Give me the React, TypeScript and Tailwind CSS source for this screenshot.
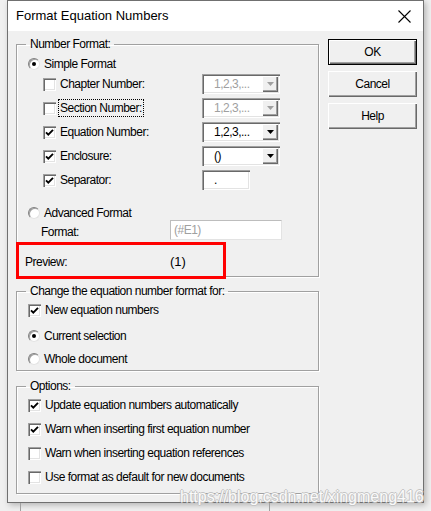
import React from "react";

const sunken =
  "shadow-[inset_1px_1px_0_#a0a0a0,inset_2px_2px_0_#696969,inset_-1px_-1px_0_#ffffff,inset_-2px_-2px_0_#e3e3e3]";
const raised =
  "shadow-[inset_1px_1px_0_#ffffff,inset_-1px_-1px_0_#696969,inset_-2px_-2px_0_#a0a0a0]";
const groupBox =
  "border border-[#a0a0a0] shadow-[inset_1px_1px_0_#ffffff,1px_1px_0_#ffffff]";

function Check({ on }: { on?: boolean }) {
  return (
    <span className={`flex h-[13px] w-[13px] shrink-0 items-center justify-center bg-white ${sunken}`}>
      {on && (
        <svg width="13" height="13" viewBox="0 0 13 13">
          <path d="M3 6.3l2.3 2.3L10 3.8" fill="none" stroke="#000" strokeWidth="1.9" />
        </svg>
      )}
    </span>
  );
}

function Radio({ on }: { on?: boolean }) {
  return (
    <span className="flex h-[12px] w-[12px] shrink-0 items-center justify-center rounded-full border border-t-[#808080] border-l-[#808080] border-r-[#e3e3e3] border-b-[#e3e3e3] bg-white shadow-[inset_1px_1px_0_#a0a0a0]">
      {on && <span className="h-[4px] w-[4px] rounded-full bg-black" />}
    </span>
  );
}

function Arrow({ disabled }: { disabled?: boolean }) {
  return (
    <span className={`flex h-[16px] w-[16px] items-center justify-center bg-[#f0f0f0] ${raised}`}>
      <svg width="7" height="4" viewBox="0 0 7 4">
        <path d="M0 0h7L3.5 4z" fill={disabled ? "#a0a0a0" : "#000"} />
      </svg>
    </span>
  );
}

function Combo({ value, disabled }: { value: string; disabled?: boolean }) {
  return (
    <div className={`flex h-[20px] w-[78px] items-center justify-between bg-white pl-[12px] pr-[2px] ${sunken}`}>
      <span className={disabled ? "text-[#a0a0a0]" : "text-black"}>{value}</span>
      <Arrow disabled={disabled} />
    </div>
  );
}

function CheckRow({
  label,
  on,
  focus,
  children,
}: {
  label: string;
  on?: boolean;
  focus?: boolean;
  children: React.ReactNode;
}) {
  return (
    <div className="mt-[4px] flex h-[20px] items-center">
      <div className="ml-[18px] flex w-[159px] items-center gap-[4px]">
        <Check on={on} />
        <span className={focus ? "outline outline-1 outline-dotted outline-black outline-offset-[1px]" : ""}>
          {label}
        </span>
      </div>
      {children}
    </div>
  );
}

function Option({ label, on, radio, className }: { label: string; on?: boolean; radio?: boolean; className: string }) {
  return (
    <div className={`ml-[3px] flex h-[16px] items-center gap-[4px] ${className}`}>
      {radio ? <Radio on={on} /> : <Check on={on} />}
      <span>{label}</span>
    </div>
  );
}

function Button({ label, primary }: { label: string; primary?: boolean }) {
  return (
    <div
      className={`flex h-[26px] w-[89px] items-center justify-center bg-[#f0f0f0] text-black ${
        primary ? "border border-black" : ""
      } ${raised}`}
    >
      {label}
    </div>
  );
}

export default function App() {
  return (
    <div className="relative h-[511px] w-[431px] overflow-hidden bg-[#f0f0f0] font-['Liberation_Sans',Arial,sans-serif] text-[12px] leading-[14px] tracking-[-0.5px] text-black">
      <div className="ml-[7px] flex h-[503px] w-[417px] flex-col border border-[#707070] bg-[#f0f0f0] shadow-[2px_2px_6px_rgba(0,0,0,0.25)]">
        <div className="flex h-[30px] items-center justify-between bg-white pl-[8px] pr-[12px]">
          <span className="text-[13px] tracking-normal">Format Equation Numbers</span>
          <svg width="13" height="13" viewBox="0 0 13 13">
            <path d="M0.5 0.5l12 12M12.5 0.5l-12 12" stroke="#000" strokeWidth="1.1" />
          </svg>
        </div>

        <div className="flex pt-[6px]">
          <div className="ml-[8px] flex w-[303px] flex-col">
            <fieldset className={`pb-[6px] pl-[8px] ${groupBox}`}>
              <legend className="ml-[1px] px-[4px] leading-[14px]">Number Format:</legend>
              <Option label="Simple Format" on radio className="mt-[5px]" />
              <div className="-mt-[2px]">
                <CheckRow label="Chapter Number:">
                  <Combo value="1,2,3,..." disabled />
                </CheckRow>
              </div>
              <CheckRow label="Section Number:" focus>
                <Combo value="1,2,3,..." disabled />
              </CheckRow>
              <CheckRow label="Equation Number:" on>
                <Combo value="1,2,3,..." />
              </CheckRow>
              <CheckRow label="Enclosure:" on>
                <Combo value="()" />
              </CheckRow>
              <CheckRow label="Separator:" on>
                <div className={`flex h-[20px] w-[48px] items-center bg-white pl-[12px] ${sunken}`}>.</div>
              </CheckRow>
              <div className="ml-[3px] mt-[15px] flex h-[15px] items-center gap-[4px]">
                <Radio />
                <span>Advanced Format</span>
              </div>
              <div className="flex h-[20px] items-center">
                <span className="ml-[16px] mt-[4px] w-[129px]">Format:</span>
                <div className="flex h-[20px] w-[112px] items-center border border-t-[#bdbdbd] border-l-[#bdbdbd] border-r-[#e3e3e3] border-b-[#e3e3e3] bg-white pl-[3px] text-[#a0a0a0]">
                  (#E1)
                </div>
              </div>
              <div className="mt-[14px] flex h-[16px] items-center">
                <span className="w-[145px]">Preview:</span>
                <span className="text-[13px] tracking-normal">(1)</span>
              </div>
            </fieldset>

            <fieldset className={`mt-[7px] pb-[3px] pl-[8px] ${groupBox}`}>
              <legend className="ml-[1px] px-[4px] leading-[14px]">Change the equation number format for:</legend>
              <Option label="New equation numbers" on className="mt-[4px]" />
              <Option label="Current selection" on radio className="mt-[10px]" />
              <Option label="Whole document" radio className="mt-[7px]" />
            </fieldset>

            <fieldset className={`mt-[8px] pb-[8px] pl-[8px] ${groupBox}`}>
              <legend className="ml-[1px] px-[4px] leading-[14px]">Options:</legend>
              <Option label="Update equation numbers automatically" on className="mt-[4px]" />
              <Option label="Warn when inserting first equation number" on className="mt-[8px]" />
              <Option label="Warn when inserting equation references" className="mt-[8px]" />
              <Option label="Use format as default for new documents" className="mt-[8px]" />
            </fieldset>
          </div>

          <div className="ml-[9px] mt-[2px] flex flex-col gap-[6px]">
            <Button label="OK" primary />
            <Button label="Cancel" />
            <Button label="Help" />
          </div>
        </div>
      </div>

      <div className="ml-[20px] h-[8px] w-[250px] border-x border-[#a0a0a0]" />

      <div className="pointer-events-none absolute left-[16px] top-[242px] h-[37px] w-[210px] border-[3px] border-[#ff0000]" />

      <div className="pointer-events-none absolute left-[180px] top-[488px] text-[16px] leading-[18px] tracking-normal text-[#fafafa] [text-shadow:1px_0_0_#c4c4c4,-1px_0_0_#c4c4c4,0_1px_0_#c4c4c4,0_-1px_0_#c4c4c4]">
        https://blog.csdn.net/xingmeng416
      </div>
    </div>
  );
}
